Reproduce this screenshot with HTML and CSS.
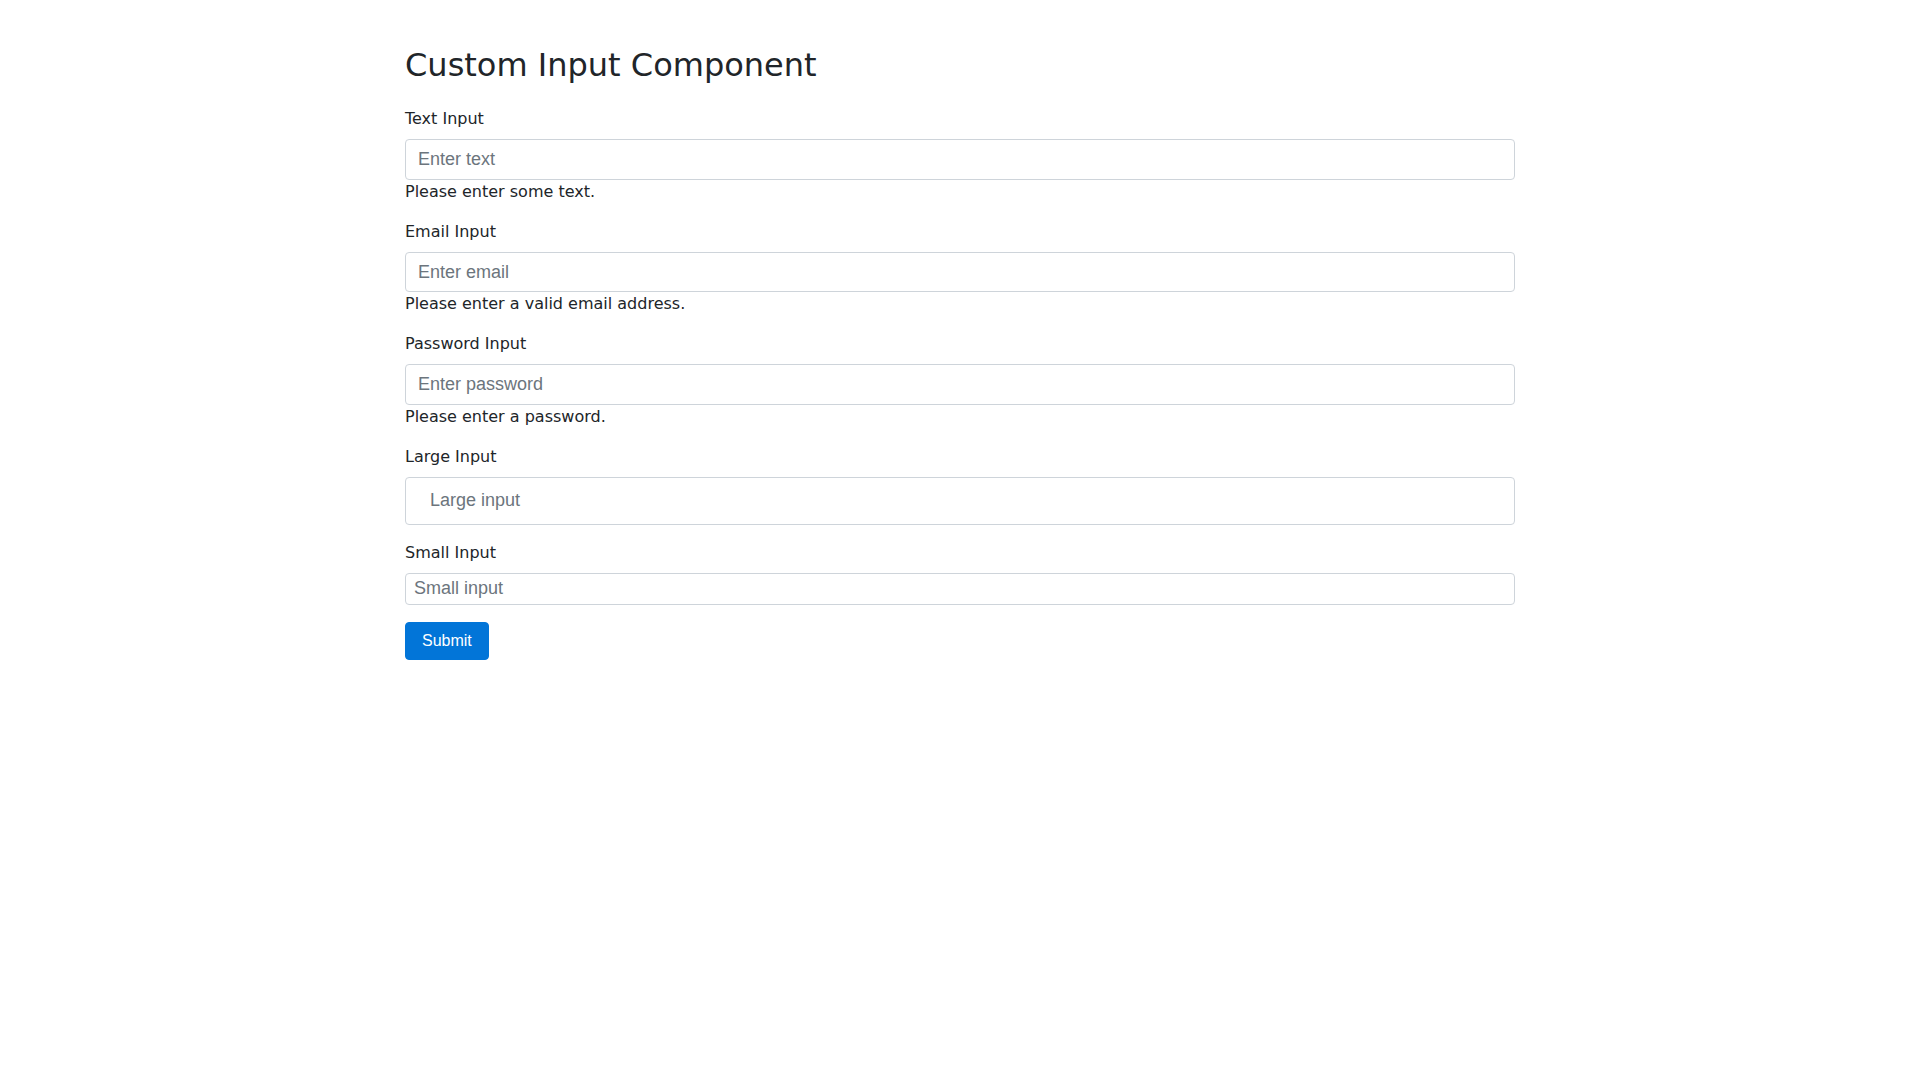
FILE: index.html
```html
<!DOCTYPE html>
<html lang="en">
<head>
<meta charset="utf-8">
<title>Custom Input Component</title>
<link rel="stylesheet" href="styles.css">
</head>
<body>
<div class="container">
  <h2 class="title">Custom Input Component</h2>
  <form class="form">
    <div class="field">
      <label class="label" for="t1">Text Input</label>
      <input class="control" id="t1" type="text" placeholder="Enter text">
      <div class="help">Please enter some text.</div>
    </div>
    <div class="field">
      <label class="label" for="t2">Email Input</label>
      <input class="control" id="t2" type="email" placeholder="Enter email">
      <div class="help">Please enter a valid email address.</div>
    </div>
    <div class="field">
      <label class="label" for="t3">Password Input</label>
      <input class="control" id="t3" type="password" placeholder="Enter password">
      <div class="help">Please enter a password.</div>
    </div>
    <div class="field">
      <label class="label" for="t4">Large Input</label>
      <input class="control control-lg" id="t4" type="text" placeholder="Large input">
    </div>
    <div class="field">
      <label class="label" for="t5">Small Input</label>
      <input class="control control-sm" id="t5" type="text" placeholder="Small input">
    </div>
    <button class="btn" type="submit">Submit</button>
  </form>
</div>
</body>
</html>
```
FILE: styles.css
```css
html, body {
  margin: 0;
  padding: 0;
  background: #ffffff;
}

body {
  font-family: "DejaVu Sans", sans-serif;
  font-size: 16px;
  line-height: 1.5;
  color: #212529;
}

.container {
  width: 1110px;
  margin: 0 auto;
  padding-top: 46px;
}

.title {
  margin: 0 0 23px 0;
  font-size: 32px;
  font-weight: normal;
  line-height: 1.2;
  color: #212529;
}

.form {
  display: flex;
  flex-direction: column;
}

.field {
  display: flex;
  flex-direction: column;
  margin-bottom: 16px;
}

.label {
  display: block;
  margin-bottom: 8px;
  line-height: 24px;
}

.control {
  display: block;
  box-sizing: border-box;
  width: 100%;
  height: 40.5px;
  margin: 0;
  padding: 0 12px;
  font-family: "Liberation Sans", Arial, sans-serif;
  font-size: 18px;
  color: #495057;
  background: #ffffff;
  border: 1px solid #ced4da;
  border-radius: 4px;
  outline: none;
}

.control::placeholder {
  color: #6c757d;
  opacity: 1;
}

.control-lg {
  height: 48px;
  padding: 0 24px;
}

.control-sm {
  height: 32px;
  padding: 0 8px;
}

.help {
  line-height: 24px;
  color: #212529;
}

.btn {
  align-self: flex-start;
  margin: 1px 0 0 0;
  padding: 6px 16px;
  font-family: "Liberation Sans", Arial, sans-serif;
  font-size: 16px;
  line-height: 24px;
  color: #ffffff;
  background: #0275d8;
  border: 1px solid #0275d8;
  border-radius: 4px;
  cursor: pointer;
}
```
